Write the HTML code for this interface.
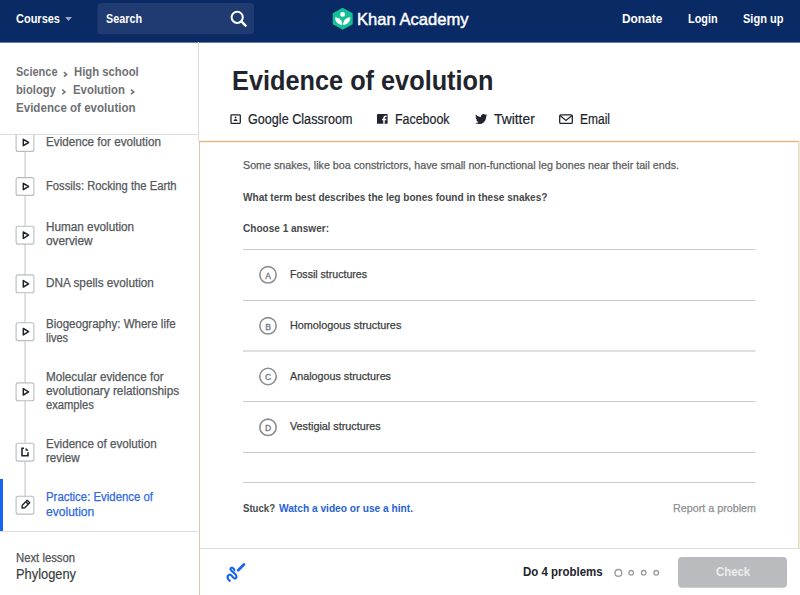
<!DOCTYPE html>
<html><head><meta charset="utf-8"><style>
html,body{margin:0;padding:0;width:800px;height:595px;overflow:hidden;background:#fff;position:relative;font-family:"Liberation Sans", sans-serif;}
.t{position:absolute;white-space:nowrap;transform-origin:0 0;display:inline-block;}
.a{position:absolute;}
</style></head><body>
<svg class="a" style="left:0;top:0" width="800" height="44"><rect x="0" y="0" width="800" height="42.6" fill="#0a2a66"/></svg>
<svg class="a" style="left:0;top:0" width="800" height="42" viewBox="0 0 800 42">
  <path d="M65 17 L72 17 L68.5 21 Z" fill="#9aa5bf"/>
  <rect x="97.5" y="3" width="156.5" height="31.3" rx="4" fill="#1f3b72"/>
  <circle cx="237.2" cy="17.3" r="5.6" fill="none" stroke="#fff" stroke-width="2"/>
  <path d="M241.5 21.6 L245.6 25.7" stroke="#fff" stroke-width="2.4" stroke-linecap="round"/>
  <path d="M342.7 8.7 L351.8 13.7 L351.8 23.8 L342.7 28.8 L333.6 23.8 L333.6 13.7 Z" fill="#14bf96" stroke="#14bf96" stroke-width="1.8" stroke-linejoin="round"/>
  <circle cx="342.6" cy="14.4" r="2.4" fill="#fff"/>
  <path d="M335 17.2 C339.5 17.4 342.3 20.5 342.3 24.8 C337.8 24.6 335 21.5 335 17.2 Z" fill="#fff"/>
  <path d="M350.3 17.2 C345.8 17.4 343.1 20.5 343.1 24.8 C347.6 24.6 350.3 21.5 350.3 17.2 Z" fill="#fff"/>
</svg>
<!-- sidebar -->
<div class="a" style="left:198px;top:42px;width:1px;height:99px;background:#dcdcdc;"></div>
<div class="a" style="left:0;top:134px;width:198px;height:1px;background:#dcdcdc;"></div>
<svg class="a" style="left:0;top:42px" width="198" height="110" viewBox="0 42 198 110">
  <path d="M63.9 72.2 L66.6 74.4 L63.9 76.6" fill="none" stroke="#6f7174" stroke-width="1.5"/>
  <path d="M62.3 89.6 L65 91.9 L62.3 94.2" fill="none" stroke="#6f7174" stroke-width="1.5"/>
  <path d="M131 89.6 L133.8 91.9 L131 94.2" fill="none" stroke="#6f7174" stroke-width="1.5"/>
</svg>
<div class="a" style="left:0;top:135px;width:198px;height:396px;overflow:hidden;">
<svg class="a" style="left:0;top:0" width="198" height="396" viewBox="0 135 198 396">
  <rect x="24.3" y="120" width="1.6" height="385" fill="#d6d8da"/>
  <g fill="#fff" stroke="#babcbe" stroke-width="1.1">
    <rect x="16.1" y="133.6" width="17.8" height="17.8" rx="2"/>
    <rect x="16.1" y="177.6" width="17.8" height="17.8" rx="2"/>
    <rect x="16.1" y="226.3" width="17.8" height="17.8" rx="2"/>
    <rect x="16.1" y="274.9" width="17.8" height="17.8" rx="2"/>
    <rect x="16.1" y="322.8" width="17.8" height="17.8" rx="2"/>
    <rect x="16.1" y="382.9" width="17.8" height="17.8" rx="2"/>
    <rect x="16.1" y="443.3" width="17.8" height="17.8" rx="2"/>
    <rect x="16.1" y="496.3" width="17.8" height="17.8" rx="2"/>
  </g>
  <g fill="none" stroke="#21242c" stroke-width="1.5" stroke-linejoin="round">
    <path d="M23.3 139.3 L28.6 142.5 L23.3 145.7 Z"/>
    <path d="M23.3 183.3 L28.6 186.5 L23.3 189.7 Z"/>
    <path d="M23.3 232 L28.6 235.2 L23.3 238.4 Z"/>
    <path d="M23.3 280.6 L28.6 283.8 L23.3 287 Z"/>
    <path d="M23.3 328.5 L28.6 331.7 L23.3 334.9 Z"/>
    <path d="M23.3 388.6 L28.6 391.8 L23.3 395 Z"/>
  </g>
  <path d="M24 448.2 L22 448.2 L22 455.8 L28 455.8 L28 452.2" fill="none" stroke="#21242c" stroke-width="1.6"/>
  <path d="M25.6 447.6 L28.7 450.7 L25.6 450.7 Z" fill="#21242c"/>
  <path d="M22 508 L22.3 505.2 L27.2 500.3 L29.7 502.8 L24.8 507.7 Z M25.8 501.7 L28.3 504.2" fill="none" stroke="#21242c" stroke-width="1.4" stroke-linejoin="round"/>
</svg>
</div>
<div class="a" style="left:0;top:479px;width:3px;height:52px;background:#1865f2;"></div>
<div class="a" style="left:0;top:531px;width:198px;height:1px;background:#dcdcdc;"></div>
<!-- exercise card -->
<div class="a" style="left:199px;top:141px;width:1px;height:454px;background:#dbc9ad;"></div>
<div class="a" style="left:199px;top:140px;width:601px;height:1px;background:#fcefdc;"></div><div class="a" style="left:200px;top:142px;width:598px;height:1px;background:#f8f2e2;"></div><div class="a" style="left:199px;top:141px;width:601px;height:1px;background:#dcb582;"></div>
<div class="a" style="left:798px;top:141px;width:1px;height:407px;background:#e6d9c6;"></div><div class="a" style="left:799px;top:141px;width:1px;height:407px;background:#f2eacd;"></div>
<svg class="a" style="left:200px;top:142px" width="598" height="453" viewBox="200 142 598 453">
  <g fill="#cbcccd">
    <rect x="243" y="249" width="512.5" height="1"/>
    <rect x="243" y="300" width="512.5" height="1"/>
    <rect x="243" y="350" width="512.5" height="2" fill="#dddedf"/>
    <rect x="243" y="401" width="512.5" height="1"/>
    <rect x="243" y="452" width="512.5" height="1"/>
    <rect x="243" y="482" width="512.5" height="1"/>
  </g>
  <g fill="none" stroke="#8b8e92" stroke-width="1.6">
    <circle cx="268" cy="274.8" r="8.2"/>
    <circle cx="268" cy="325.8" r="8.2"/>
    <circle cx="268" cy="376.5" r="8.2"/>
    <circle cx="268" cy="427.3" r="8.2"/>
  </g>
  <g fill="#7a7d81" stroke="#7a7d81" stroke-width="0.35" font-family="Liberation Sans" font-size="8.5" font-weight="400" text-anchor="middle">
    <text x="268" y="278.5">A</text>
    <text x="268" y="329.5">B</text>
    <text x="268" y="380.2">C</text>
    <text x="268" y="431">D</text>
  </g>
</svg>
<div class="a" style="left:200px;top:548px;width:600px;height:1px;background:#dcdcdc;"></div>
<svg class="a" style="left:200px;top:549px" width="600" height="46" viewBox="200 549 600 46">
  <path d="M229.8 580.9 C228 579.5 227.2 577.5 227.8 576 C228.4 574.6 230 574.2 231.2 575.2 C232.3 576.1 233.3 578.2 234.6 578.5 C235.8 578.8 236.6 577.8 236.4 576.2 C236.2 574.6 234.6 573.2 232.8 571.8 C231 570.5 230 569.6 230.5 568.6 C231 567.6 232.6 567.6 233.4 568.4 C233.9 568.9 234.3 569.5 234.4 570.1" fill="none" stroke="#1865f2" stroke-width="2.1" stroke-linecap="round" stroke-linejoin="round"/>
  <path d="M238.2 570.2 L243.9 564.6" stroke="#1865f2" stroke-width="2.8" stroke-linecap="round"/>
  <circle cx="618.4" cy="572.9" r="3.4" fill="none" stroke="#9a9da0" stroke-width="1.4"/>
  <circle cx="631.2" cy="572.8" r="2.3" fill="none" stroke="#9a9da0" stroke-width="1.3"/>
  <circle cx="643.7" cy="572.8" r="2.3" fill="none" stroke="#9a9da0" stroke-width="1.3"/>
  <circle cx="656.2" cy="572.8" r="2.3" fill="none" stroke="#9a9da0" stroke-width="1.3"/>
  <rect x="678" y="557" width="109" height="30.7" rx="4" fill="#b9bbbe"/>
</svg>
<svg class="a" style="left:220px;top:105px" width="380" height="30" viewBox="220 105 380 30">
  <rect x="231" y="114.8" width="9.3" height="8.5" rx="0.8" fill="none" stroke="#21242c" stroke-width="1.3"/>
  <circle cx="235.6" cy="117.5" r="0.9" fill="#21242c"/>
  <path d="M233.6 120.9 C233.8 119.6 234.6 119.2 235.6 119.2 C236.6 119.2 237.4 119.6 237.6 120.9 Z" fill="#21242c"/>
  <rect x="377" y="114" width="10.6" height="9.8" rx="0.6" fill="#21242c"/>
  <path d="M384 123.8 L384 118.3 C384 116.9 384.7 116.3 386 116.3 L386.6 116.3 M382 119.6 L386.3 119.6" fill="none" stroke="#fff" stroke-width="1.5"/>
  <path transform="translate(0.8 0)" d="M486.6 115.2 C486.1 115.5 485.5 115.6 485 115.6 C485.5 115.2 486 114.7 486.1 114.1 C485.6 114.4 485 114.6 484.4 114.7 C483.9 114.2 483.3 114 482.6 114 C481.2 114 480.1 115.1 480.1 116.5 C480.1 116.7 480.1 116.9 480.2 117.1 C478.2 117 476.3 116 475.1 114.5 C474.9 114.9 474.8 115.3 474.8 115.8 C474.8 116.7 475.2 117.4 475.9 117.9 C475.5 117.9 475.1 117.8 474.8 117.6 C474.8 118.8 475.7 119.9 476.8 120.1 C476.4 120.2 476 120.3 475.6 120.2 C475.9 121.2 476.9 121.9 478 121.9 C477.1 122.6 476 123 474.9 123 C474.7 123 474.5 123 474.3 123 C475.4 123.7 476.8 124.1 478.2 124.1 C482.8 124.1 485.3 120.3 485.3 117 L485.3 116.7 C485.8 116.3 486.2 115.8 486.6 115.2 Z" fill="#21242c"/>
  <rect x="559.7" y="114.8" width="12.6" height="8.6" rx="1.2" fill="none" stroke="#21242c" stroke-width="1.3"/>
  <path d="M560 115.5 L566 120.5 L572 115.5" fill="none" stroke="#21242c" stroke-width="1.3"/>
</svg>

<span id="t0" class="t" style="left:16.00px;top:12.00px;font-size:13px;line-height:13px;font-weight:700;color:#ffffff;transform:scaleX(0.8456);">Courses</span>
<span id="t1" class="t" style="left:106.00px;top:12.00px;font-size:13px;line-height:13px;font-weight:700;color:#ffffff;transform:scaleX(0.8300);">Search</span>
<span id="t2" class="t" style="left:357.30px;top:11.00px;font-size:17px;line-height:17px;font-weight:400;color:#ffffff;transform:scaleX(0.9750);-webkit-text-stroke:0.45px #fff;">Khan Academy</span>
<span id="t3" class="t" style="left:622.40px;top:12.00px;font-size:13px;line-height:13px;font-weight:700;color:#ffffff;transform:scaleX(0.9146);">Donate</span>
<span id="t4" class="t" style="left:688.40px;top:12.00px;font-size:13px;line-height:13px;font-weight:700;color:#ffffff;transform:scaleX(0.8364);">Login</span>
<span id="t5" class="t" style="left:743.00px;top:12.00px;font-size:13px;line-height:13px;font-weight:700;color:#ffffff;transform:scaleX(0.8496);">Sign up</span>
<span id="t6" class="t" style="left:16.10px;top:65.00px;font-size:13px;line-height:13px;font-weight:700;color:#6f7174;transform:scaleX(0.8442);">Science</span>
<span id="t7" class="t" style="left:73.90px;top:65.00px;font-size:13px;line-height:13px;font-weight:700;color:#6f7174;transform:scaleX(0.8697);">High school</span>
<span id="t8" class="t" style="left:16.10px;top:83.00px;font-size:13px;line-height:13px;font-weight:700;color:#6f7174;transform:scaleX(0.8611);">biology</span>
<span id="t9" class="t" style="left:72.70px;top:83.00px;font-size:13px;line-height:13px;font-weight:700;color:#6f7174;transform:scaleX(0.8764);">Evolution</span>
<span id="t10" class="t" style="left:16.10px;top:101.00px;font-size:13px;line-height:13px;font-weight:700;color:#6f7174;transform:scaleX(0.8902);">Evidence of evolution</span>
<span id="t11" class="t" style="left:232.00px;top:67.00px;font-size:28px;line-height:28px;font-weight:700;color:#21242c;transform:scaleX(0.9036);">Evidence of evolution</span>
<span id="t12" class="t" style="left:247.50px;top:112.00px;font-size:14px;line-height:14px;font-weight:400;color:#21242c;transform:scaleX(0.9013);-webkit-text-stroke:0.2px #21242c;">Google Classroom</span>
<span id="t13" class="t" style="left:395.00px;top:112.00px;font-size:14px;line-height:14px;font-weight:400;color:#21242c;transform:scaleX(0.8864);-webkit-text-stroke:0.2px #21242c;">Facebook</span>
<span id="t14" class="t" style="left:493.75px;top:112.00px;font-size:14px;line-height:14px;font-weight:400;color:#21242c;transform:scaleX(0.9883);-webkit-text-stroke:0.2px #21242c;">Twitter</span>
<span id="t15" class="t" style="left:579.50px;top:112.00px;font-size:14px;line-height:14px;font-weight:400;color:#21242c;transform:scaleX(0.8568);-webkit-text-stroke:0.2px #21242c;">Email</span>
<span id="t16" class="t" style="left:46.40px;top:136.00px;font-size:12px;line-height:12px;font-weight:400;color:#54575b;transform:scaleX(0.9731);-webkit-text-stroke:0.25px #54575b;">Evidence for evolution</span>
<span id="t17" class="t" style="left:46.40px;top:180.00px;font-size:12px;line-height:12px;font-weight:400;color:#54575b;transform:scaleX(0.9369);-webkit-text-stroke:0.25px #54575b;">Fossils: Rocking the Earth</span>
<span id="t18" class="t" style="left:46.40px;top:221.00px;font-size:12px;line-height:12px;font-weight:400;color:#54575b;transform:scaleX(0.9782);-webkit-text-stroke:0.25px #54575b;">Human evolution</span>
<span id="t19" class="t" style="left:46.40px;top:235.00px;font-size:12px;line-height:12px;font-weight:400;color:#54575b;transform:scaleX(0.9840);-webkit-text-stroke:0.25px #54575b;">overview</span>
<span id="t20" class="t" style="left:46.40px;top:277.00px;font-size:12px;line-height:12px;font-weight:400;color:#54575b;transform:scaleX(0.9804);-webkit-text-stroke:0.25px #54575b;">DNA spells evolution</span>
<span id="t21" class="t" style="left:46.40px;top:318.00px;font-size:12px;line-height:12px;font-weight:400;color:#54575b;transform:scaleX(0.9618);-webkit-text-stroke:0.25px #54575b;">Biogeography: Where life</span>
<span id="t22" class="t" style="left:46.40px;top:332.00px;font-size:12px;line-height:12px;font-weight:400;color:#54575b;transform:scaleX(0.9161);-webkit-text-stroke:0.25px #54575b;">lives</span>
<span id="t23" class="t" style="left:46.40px;top:371.00px;font-size:12px;line-height:12px;font-weight:400;color:#54575b;transform:scaleX(0.9740);-webkit-text-stroke:0.25px #54575b;">Molecular evidence for</span>
<span id="t24" class="t" style="left:46.40px;top:385.00px;font-size:12px;line-height:12px;font-weight:400;color:#54575b;transform:scaleX(0.9836);-webkit-text-stroke:0.25px #54575b;">evolutionary relationships</span>
<span id="t25" class="t" style="left:46.40px;top:399.00px;font-size:12px;line-height:12px;font-weight:400;color:#54575b;transform:scaleX(0.9326);-webkit-text-stroke:0.25px #54575b;">examples</span>
<span id="t26" class="t" style="left:46.40px;top:438.00px;font-size:12px;line-height:12px;font-weight:400;color:#54575b;transform:scaleX(0.9695);-webkit-text-stroke:0.25px #54575b;">Evidence of evolution</span>
<span id="t27" class="t" style="left:46.40px;top:452.00px;font-size:12px;line-height:12px;font-weight:400;color:#54575b;transform:scaleX(0.9686);-webkit-text-stroke:0.25px #54575b;">review</span>
<span id="t28" class="t" style="left:46.40px;top:491.00px;font-size:12px;line-height:12px;font-weight:400;color:#2f6ae0;transform:scaleX(0.9491);-webkit-text-stroke:0.25px #2f6ae0;">Practice: Evidence of</span>
<span id="t29" class="t" style="left:46.40px;top:505.60px;font-size:12px;line-height:12px;font-weight:400;color:#2f6ae0;transform:scaleX(1.0053);-webkit-text-stroke:0.25px #2f6ae0;">evolution</span>
<span id="t30" class="t" style="left:16.20px;top:552.00px;font-size:12px;line-height:12px;font-weight:400;color:#505357;transform:scaleX(0.9425);-webkit-text-stroke:0.25px #505357;">Next lesson</span>
<span id="t31" class="t" style="left:16.20px;top:567.00px;font-size:14px;line-height:14px;font-weight:400;color:#3b3e40;transform:scaleX(0.9176);-webkit-text-stroke:0.2px #3b3e40;">Phylogeny</span>
<span id="t32" class="t" style="left:243.00px;top:160.00px;font-size:11px;line-height:11px;font-weight:400;color:#5a5d61;transform:scaleX(0.9728);-webkit-text-stroke:0.25px #5a5d61;">Some snakes, like boa constrictors, have small non-functional leg bones near their tail ends.</span>
<span id="t33" class="t" style="left:243.00px;top:192.00px;font-size:11px;line-height:11px;font-weight:700;color:#46494c;transform:scaleX(0.9137);">What term best describes the leg bones found in these snakes?</span>
<span id="t34" class="t" style="left:243.00px;top:223.00px;font-size:11px;line-height:11px;font-weight:700;color:#46494c;transform:scaleX(0.9135);">Choose 1 answer:</span>
<span id="t35" class="t" style="left:290.00px;top:269.00px;font-size:11px;line-height:11px;font-weight:400;color:#3b3e40;transform:scaleX(0.9616);-webkit-text-stroke:0.25px #3b3e40;">Fossil structures</span>
<span id="t36" class="t" style="left:290.00px;top:320.00px;font-size:11px;line-height:11px;font-weight:400;color:#3b3e40;transform:scaleX(0.9840);-webkit-text-stroke:0.25px #3b3e40;">Homologous structures</span>
<span id="t37" class="t" style="left:290.00px;top:371.00px;font-size:11px;line-height:11px;font-weight:400;color:#3b3e40;transform:scaleX(0.9773);-webkit-text-stroke:0.25px #3b3e40;">Analogous structures</span>
<span id="t38" class="t" style="left:290.00px;top:421.00px;font-size:11px;line-height:11px;font-weight:400;color:#3b3e40;transform:scaleX(0.9824);-webkit-text-stroke:0.25px #3b3e40;">Vestigial structures</span>
<span id="t39" class="t" style="left:243.00px;top:503.00px;font-size:11px;line-height:11px;font-weight:700;color:#46494c;transform:scaleX(0.8722);">Stuck?</span>
<span id="t40" class="t" style="left:279.00px;top:503.00px;font-size:11px;line-height:11px;font-weight:700;color:#2662d4;transform:scaleX(0.9237);">Watch a video or use a hint.</span>
<span id="t41" class="t" style="left:672.50px;top:503.00px;font-size:11px;line-height:11px;font-weight:400;color:#8d8f92;transform:scaleX(0.9765);-webkit-text-stroke:0.25px #8d8f92;">Report a problem</span>
<span id="t42" class="t" style="left:522.70px;top:565.00px;font-size:13px;line-height:13px;font-weight:700;color:#21242c;transform:scaleX(0.8826);">Do 4 problems</span>
<span id="t43" class="t" style="left:715.80px;top:565.00px;font-size:13px;line-height:13px;font-weight:700;color:#ededee;transform:scaleX(0.8762);">Check</span>
</body></html>
